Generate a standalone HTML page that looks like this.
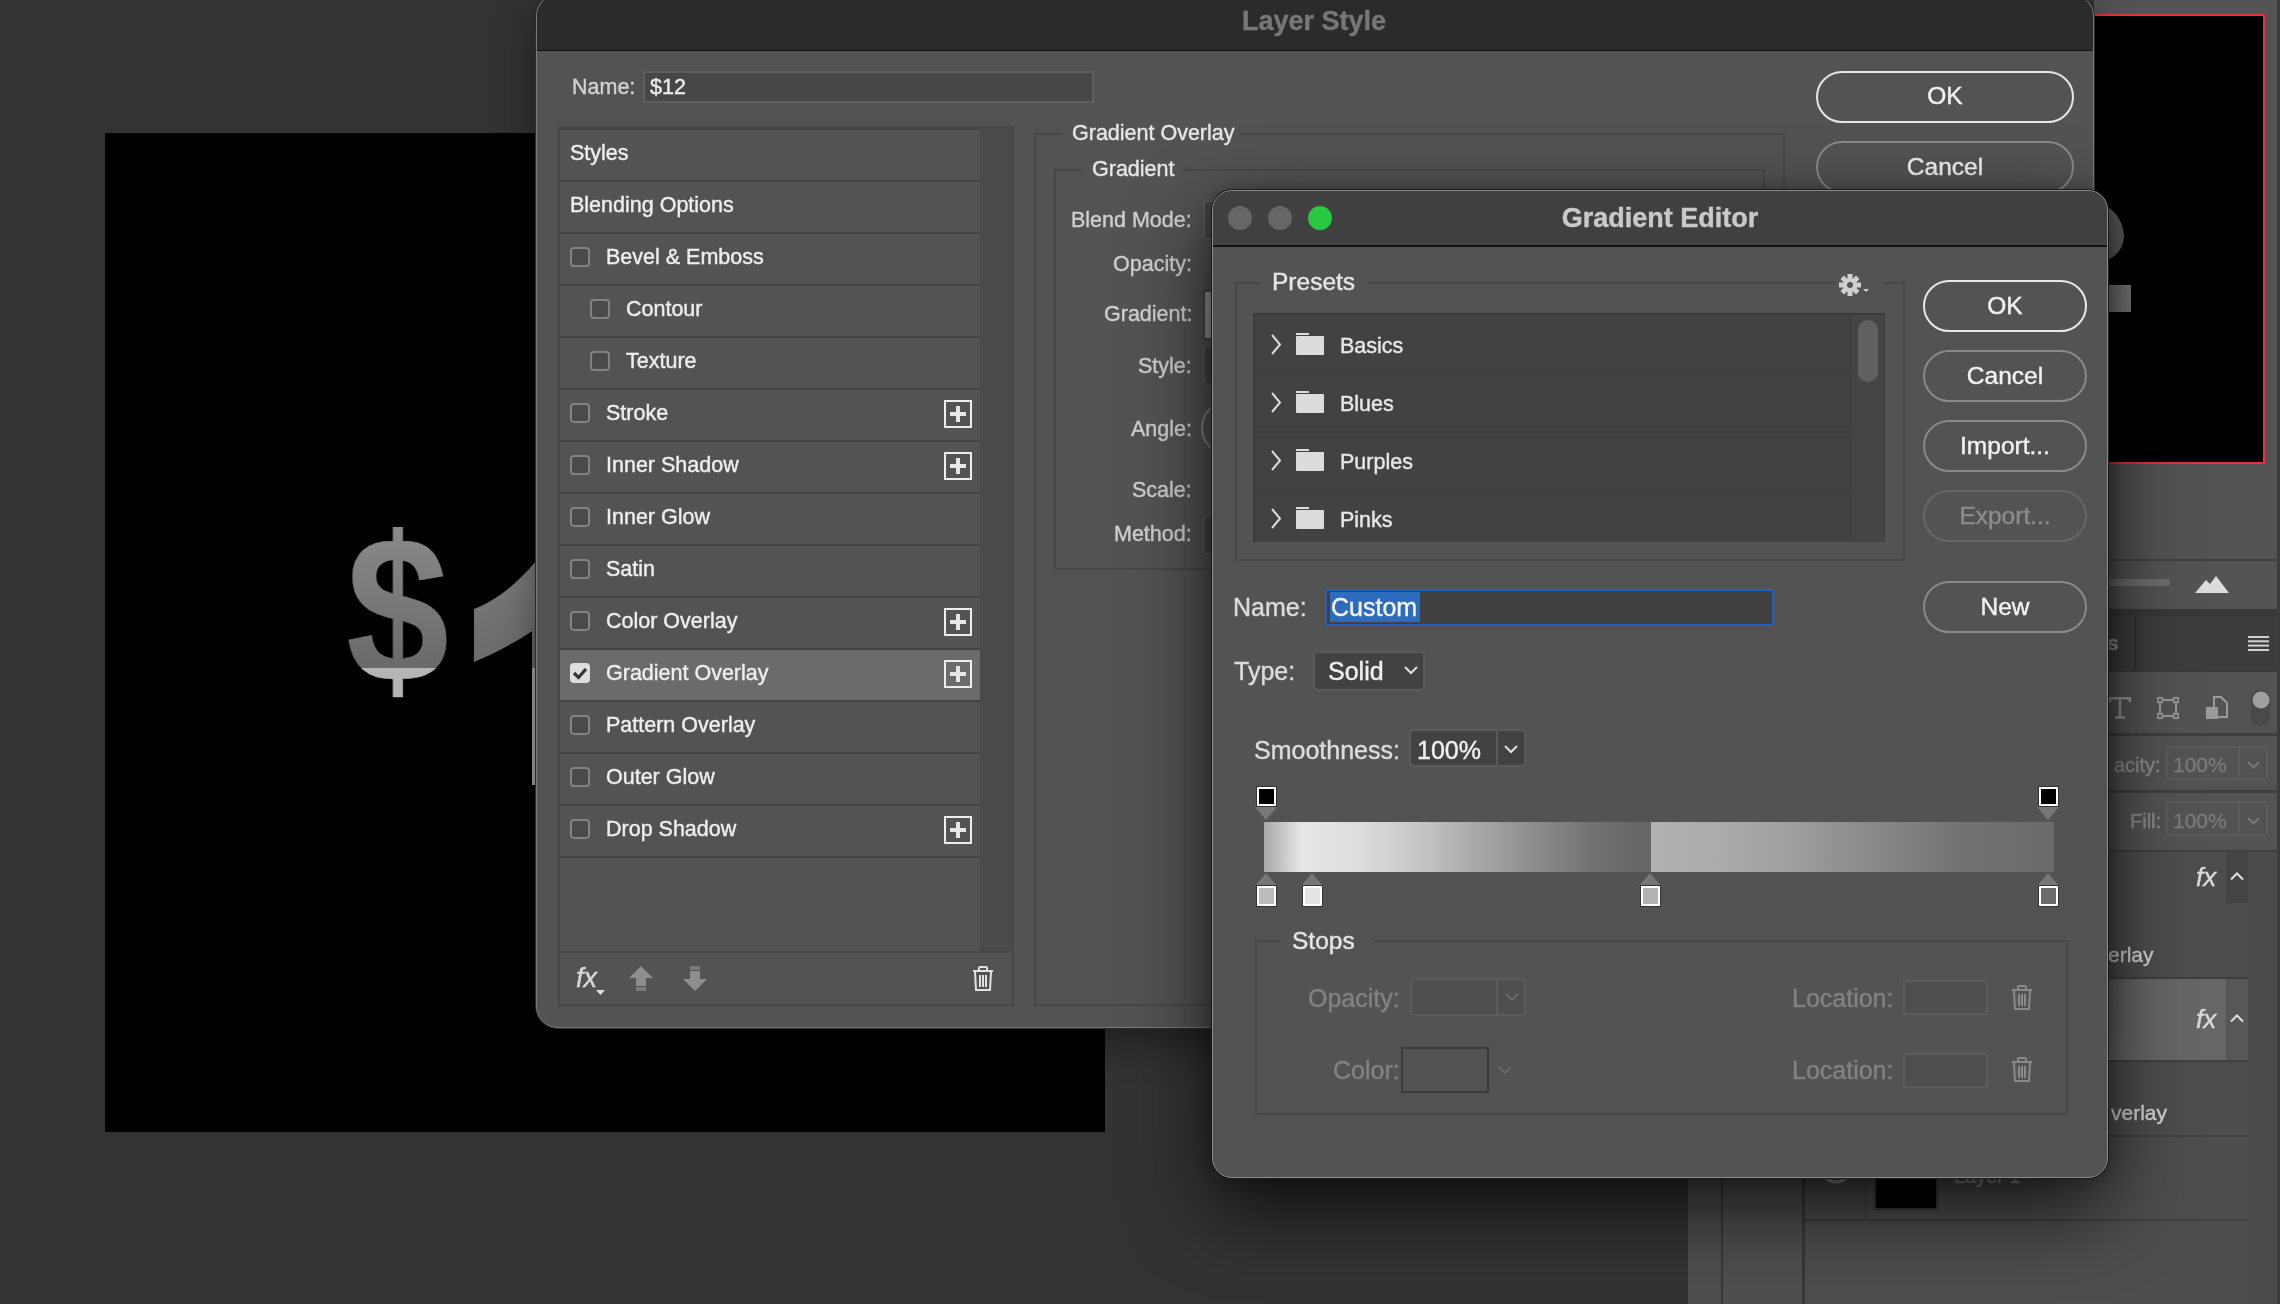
<!DOCTYPE html><html><head><meta charset="utf-8"><style>
html,body{margin:0;padding:0;}
body{width:2280px;height:1304px;overflow:hidden;position:relative;background:#333333;font-family:"Liberation Sans", sans-serif;}
.t{position:absolute;line-height:1;white-space:nowrap;-webkit-font-smoothing:antialiased;will-change:transform;-webkit-text-stroke:0.4px currentColor;}
.b{position:absolute;box-sizing:border-box;}
svg{position:absolute;overflow:visible;}
</style></head><body>
<div class="b" style="left:105px;top:133px;width:1000px;height:999px;background:#000;"></div>
<div class="t" style="left:345.6px;top:507px;font-size:207px;font-weight:bold;transform:scaleX(0.894);transform-origin:0 0;background:linear-gradient(#8a8a8a 10%,#6a6a6a 77.8%,#b5b5b5 77.8%,#b5b5b5 100%);-webkit-background-clip:text;background-clip:text;color:transparent;">$</div>
<svg style="left:0;top:0" width="560" height="800"><defs><linearGradient id="g1" x1="0" y1="0" x2="0" y2="1"><stop offset="0" stop-color="#7c7c7c"/><stop offset="1" stop-color="#6a6a6a"/></linearGradient></defs><path d="M474 609 Q506 597 537 560 L537 628 Q506 649 474 662 Z" fill="url(#g1)"/><rect x="532" y="628" width="5" height="40" fill="#6a6a6a"/><rect x="532" y="668" width="4" height="117" fill="#a4a4a4"/></svg>
<div class="b" style="left:2094px;top:0px;width:186px;height:1304px;background:#535353;"></div>
<div class="b" style="left:2277px;top:0px;width:3px;height:1304px;background:#3b3b3b;"></div>
<div class="b" style="left:2094px;top:14px;width:171px;height:450px;background:#000;border:2px solid #e5323d;border-left:none;"></div>
<svg style="left:2094px;top:190px" width="60" height="130"><path d="M0 10 Q28 20 30 45 Q30 62 14 70 L0 70 Z" fill="#5a5a5a"/><rect x="14" y="95" width="23" height="27" fill="#7a7a7a"/></svg>
<div class="b" style="left:2094px;top:559px;width:183px;height:2px;background:#3f3f3f;"></div>
<div class="b" style="left:2094px;top:579px;width:76px;height:7px;background:#6d6d6d;border-radius:0 3px 3px 0;"></div>
<svg style="left:2195px;top:574px" width="34" height="20"><path d="M0 19 L11 6 L15 10 L21 2 L34 19 Z" fill="#dcdcdc"/></svg>
<div class="b" style="left:2094px;top:609px;width:183px;height:7px;background:#383838;"></div>
<div class="b" style="left:2094px;top:616px;width:183px;height:54px;background:#3d3d3d;"></div>
<div class="b" style="left:2134px;top:616px;width:2px;height:54px;background:#333;"></div>
<div class="t" style="top:632.0px;font-size:21px;color:#8e8e8e;font-weight:bold;left:2107px;">s</div>
<svg style="left:2248px;top:636px" width="21" height="15"><g fill="#d0d0d0"><rect x="0" y="0" width="21" height="2"/><rect x="0" y="4.3" width="21" height="2"/><rect x="0" y="8.6" width="21" height="2"/><rect x="0" y="13" width="21" height="2"/></g></svg>
<div class="b" style="left:2094px;top:670px;width:183px;height:2px;background:#3a3a3a;"></div>
<svg style="left:2109px;top:697px" width="22" height="22"><path d="M1.2 5 V1.2 H20.8 V5 M11 1.2 V20.5 M6 20.5 H16" stroke="#9a9a9a" stroke-width="2.4" fill="none"/></svg>
<svg style="left:2157px;top:697px" width="22" height="22"><rect x="3" y="3" width="16" height="16" stroke="#9a9a9a" stroke-width="2" fill="none"/><g fill="#535353" stroke="#9a9a9a" stroke-width="1.6"><rect x="0.8" y="0.8" width="4.5" height="4.5"/><rect x="16.7" y="0.8" width="4.5" height="4.5"/><rect x="0.8" y="16.7" width="4.5" height="4.5"/><rect x="16.7" y="16.7" width="4.5" height="4.5"/></g></svg>
<svg style="left:2206px;top:696px" width="22" height="24"><path d="M8 1 H15 L21 7 V21 H8 Z" stroke="#9a9a9a" stroke-width="2" fill="none"/><rect x="0" y="11" width="12" height="12" fill="#9a9a9a"/></svg>
<div class="b" style="left:2251px;top:690px;width:19px;height:36px;border-radius:10px;background:#4a4a4a;border:2px solid #474747;"></div>
<svg style="left:2252px;top:691px" width="18" height="18"><circle cx="9" cy="9" r="8.5" fill="#a0a0a0"/></svg>
<div class="b" style="left:2094px;top:733px;width:183px;height:3px;background:#3f3f3f;"></div>
<div class="t" style="top:755.0px;font-size:20px;color:#8c8c8c;font-weight:normal;right:119px;text-align:right;">acity:</div>
<div class="b" style="left:2166px;top:746px;width:102px;height:34px;border:2px solid #5c5c5c;border-radius:4px;"></div>
<div class="b" style="left:2238px;top:746px;width:2px;height:34px;background:#5c5c5c;"></div>
<div class="t" style="top:754.0px;font-size:21px;color:#7a7a7a;font-weight:normal;left:2173px;">100%</div>
<svg style="left:2247px;top:761px" width="13" height="8"><path d="M1 1 L6.5 6.5 L12 1" stroke="#7a7a7a" stroke-width="1.8" fill="none"/></svg>
<div class="b" style="left:2094px;top:790px;width:183px;height:3px;background:#3f3f3f;"></div>
<div class="t" style="top:811.0px;font-size:20px;color:#8c8c8c;font-weight:normal;right:119px;text-align:right;">Fill:</div>
<div class="b" style="left:2166px;top:801px;width:102px;height:35px;border:2px solid #5c5c5c;border-radius:4px;"></div>
<div class="b" style="left:2238px;top:801px;width:2px;height:35px;background:#5c5c5c;"></div>
<div class="t" style="top:810.0px;font-size:21px;color:#7a7a7a;font-weight:normal;left:2173px;">100%</div>
<svg style="left:2247px;top:817px" width="13" height="8"><path d="M1 1 L6.5 6.5 L12 1" stroke="#7a7a7a" stroke-width="1.8" fill="none"/></svg>
<div class="b" style="left:2094px;top:850px;width:183px;height:2px;background:#3f3f3f;"></div>
<div class="b" style="left:1805px;top:852px;width:443px;height:452px;background:#4d4d4d;"></div>
<div class="b" style="left:2248px;top:852px;width:29px;height:452px;background:#4b4b4b;"></div>
<div class="b" style="left:2226px;top:852px;width:22px;height:51px;background:#444;"></div>
<div class="t" style="left:2196px;top:864px;font-size:26px;font-style:italic;color:#dadada;font-family:'Liberation Sans',sans-serif;">fx</div>
<svg style="left:2230px;top:872px" width="14" height="9"><path d="M1 7.5 L7 1.5 L13 7.5" stroke="#e0e0e0" stroke-width="2" fill="none"/></svg>
<div class="t" style="top:943.5px;font-size:21px;color:#d6d6d6;font-weight:normal;left:2108px;">erlay</div>
<div class="b" style="left:1805px;top:977px;width:443px;height:2px;background:#3f3f3f;"></div>
<div class="b" style="left:1805px;top:979px;width:421px;height:81px;background:#666;"></div>
<div class="b" style="left:2226px;top:979px;width:22px;height:81px;background:#575757;"></div>
<div class="t" style="left:2196px;top:1006px;font-size:26px;font-style:italic;color:#dadada;font-family:'Liberation Sans',sans-serif;">fx</div>
<svg style="left:2230px;top:1014px" width="14" height="9"><path d="M1 7.5 L7 1.5 L13 7.5" stroke="#e0e0e0" stroke-width="2" fill="none"/></svg>
<div class="b" style="left:1805px;top:1060px;width:443px;height:2px;background:#3f3f3f;"></div>
<div class="t" style="top:1101.5px;font-size:21px;color:#d6d6d6;font-weight:normal;left:2111px;">verlay</div>
<div class="b" style="left:1805px;top:1135px;width:443px;height:2px;background:#3f3f3f;"></div>
<div class="b" style="left:1805px;top:1219px;width:443px;height:2px;background:#3f3f3f;"></div>
<div class="b" style="left:1874px;top:1146px;width:64px;height:64px;background:#000;border:2px solid #3a3a3a;"></div>
<div class="b" style="left:1865px;top:1137px;width:2px;height:82px;background:#454545;"></div>
<div class="t" style="top:1166.0px;font-size:20px;color:#9a9a9a;font-weight:normal;left:1954px;">Layer 1</div>
<svg style="left:1818px;top:1147px" width="36" height="40"><ellipse cx="18" cy="22" rx="14" ry="13" stroke="#9a9a9a" stroke-width="3" fill="none"/></svg>
<div class="b" style="left:1688px;top:1030px;width:117px;height:274px;background:#4e4e4e;"></div>
<div class="b" style="left:1721px;top:1030px;width:2px;height:274px;background:#383838;"></div>
<div class="b" style="left:1802px;top:1030px;width:3px;height:274px;background:#383838;"></div>
<div class="b" style="left:536px;top:-6px;width:1558px;height:1034px;border-radius:22px;background:#535353;box-shadow:0 0 0 1px #2a2a2a,0 12px 40px rgba(0,0,0,0.45);overflow:hidden;border:1px solid #7a7a7a;">
<div class="b" style="left:0;top:0;width:1558px;height:56px;background:#2b2b2b;border-bottom:1px solid #111;"></div>
</div>
<div class="t" style="top:8.0px;font-size:27px;color:#777777;font-weight:bold;left:1014px;width:600px;text-align:center;">Layer Style</div>
<div class="t" style="top:77.0px;font-size:21.5px;color:#d2d2d2;font-weight:normal;left:572px;">Name:</div>
<div class="b" style="left:643px;top:71px;width:451px;height:32px;background:#474747;border:2px solid #5f5f5f;"></div>
<div class="t" style="top:77.0px;font-size:21.5px;color:#ededed;font-weight:normal;left:650px;">$12</div>
<div class="b" style="left:558px;top:126px;width:456px;height:880px;border:2px solid #474747;background:#535353;"></div>
<div class="b" style="left:980px;top:128px;width:32px;height:824px;background:#4a4a4a;"></div>
<div class="b" style="left:560px;top:128px;width:420px;height:2px;background:#434343;"></div>
<div class="t" style="top:143.0px;font-size:21.5px;color:#eeeeee;font-weight:normal;left:570px;">Styles</div>
<div class="b" style="left:560px;top:180px;width:420px;height:2px;background:#434343;"></div>
<div class="t" style="top:195.0px;font-size:21.5px;color:#eeeeee;font-weight:normal;left:570px;">Blending Options</div>
<div class="b" style="left:560px;top:232px;width:420px;height:2px;background:#434343;"></div>
<div class="b" style="left:570px;top:247px;width:20px;height:20px;border:2px solid #828282;border-radius:4px;background:#4a4a4a;"></div>
<div class="t" style="top:247.0px;font-size:21.5px;color:#eeeeee;font-weight:normal;left:606px;">Bevel &amp; Emboss</div>
<div class="b" style="left:560px;top:284px;width:420px;height:2px;background:#434343;"></div>
<div class="b" style="left:590px;top:299px;width:20px;height:20px;border:2px solid #828282;border-radius:4px;background:#4a4a4a;"></div>
<div class="t" style="top:299.0px;font-size:21.5px;color:#eeeeee;font-weight:normal;left:626px;">Contour</div>
<div class="b" style="left:560px;top:336px;width:420px;height:2px;background:#434343;"></div>
<div class="b" style="left:590px;top:351px;width:20px;height:20px;border:2px solid #828282;border-radius:4px;background:#4a4a4a;"></div>
<div class="t" style="top:351.0px;font-size:21.5px;color:#eeeeee;font-weight:normal;left:626px;">Texture</div>
<div class="b" style="left:560px;top:388px;width:420px;height:2px;background:#434343;"></div>
<div class="b" style="left:570px;top:403px;width:20px;height:20px;border:2px solid #828282;border-radius:4px;background:#4a4a4a;"></div>
<div class="t" style="top:403.0px;font-size:21.5px;color:#eeeeee;font-weight:normal;left:606px;">Stroke</div>
<div class="b" style="left:944px;top:400px;width:28px;height:28px;border:2px solid #eeeeee;"></div>
<div class="b" style="left:950px;top:412px;width:16px;height:4px;background:#e6e6e6;"></div>
<div class="b" style="left:956px;top:406px;width:4px;height:16px;background:#e6e6e6;"></div>
<div class="b" style="left:560px;top:440px;width:420px;height:2px;background:#434343;"></div>
<div class="b" style="left:570px;top:455px;width:20px;height:20px;border:2px solid #828282;border-radius:4px;background:#4a4a4a;"></div>
<div class="t" style="top:455.0px;font-size:21.5px;color:#eeeeee;font-weight:normal;left:606px;">Inner Shadow</div>
<div class="b" style="left:944px;top:452px;width:28px;height:28px;border:2px solid #eeeeee;"></div>
<div class="b" style="left:950px;top:464px;width:16px;height:4px;background:#e6e6e6;"></div>
<div class="b" style="left:956px;top:458px;width:4px;height:16px;background:#e6e6e6;"></div>
<div class="b" style="left:560px;top:492px;width:420px;height:2px;background:#434343;"></div>
<div class="b" style="left:570px;top:507px;width:20px;height:20px;border:2px solid #828282;border-radius:4px;background:#4a4a4a;"></div>
<div class="t" style="top:507.0px;font-size:21.5px;color:#eeeeee;font-weight:normal;left:606px;">Inner Glow</div>
<div class="b" style="left:560px;top:544px;width:420px;height:2px;background:#434343;"></div>
<div class="b" style="left:570px;top:559px;width:20px;height:20px;border:2px solid #828282;border-radius:4px;background:#4a4a4a;"></div>
<div class="t" style="top:559.0px;font-size:21.5px;color:#eeeeee;font-weight:normal;left:606px;">Satin</div>
<div class="b" style="left:560px;top:596px;width:420px;height:2px;background:#434343;"></div>
<div class="b" style="left:570px;top:611px;width:20px;height:20px;border:2px solid #828282;border-radius:4px;background:#4a4a4a;"></div>
<div class="t" style="top:611.0px;font-size:21.5px;color:#eeeeee;font-weight:normal;left:606px;">Color Overlay</div>
<div class="b" style="left:944px;top:608px;width:28px;height:28px;border:2px solid #eeeeee;"></div>
<div class="b" style="left:950px;top:620px;width:16px;height:4px;background:#e6e6e6;"></div>
<div class="b" style="left:956px;top:614px;width:4px;height:16px;background:#e6e6e6;"></div>
<div class="b" style="left:560px;top:650px;width:420px;height:50px;background:#6b6b6b;"></div>
<div class="b" style="left:560px;top:648px;width:420px;height:2px;background:#434343;"></div>
<div class="b" style="left:570px;top:663px;width:20px;height:20px;background:#dedede;border-radius:4px;"></div>
<svg style="left:570px;top:663px" width="20" height="20"><path d="M4 10 L8.5 14.5 L16 6" stroke="#333" stroke-width="3.2" fill="none"/></svg>
<div class="t" style="top:663.0px;font-size:21.5px;color:#eeeeee;font-weight:normal;left:606px;">Gradient Overlay</div>
<div class="b" style="left:944px;top:660px;width:28px;height:28px;border:2px solid #eeeeee;"></div>
<div class="b" style="left:950px;top:672px;width:16px;height:4px;background:#e6e6e6;"></div>
<div class="b" style="left:956px;top:666px;width:4px;height:16px;background:#e6e6e6;"></div>
<div class="b" style="left:560px;top:700px;width:420px;height:2px;background:#434343;"></div>
<div class="b" style="left:570px;top:715px;width:20px;height:20px;border:2px solid #828282;border-radius:4px;background:#4a4a4a;"></div>
<div class="t" style="top:715.0px;font-size:21.5px;color:#eeeeee;font-weight:normal;left:606px;">Pattern Overlay</div>
<div class="b" style="left:560px;top:752px;width:420px;height:2px;background:#434343;"></div>
<div class="b" style="left:570px;top:767px;width:20px;height:20px;border:2px solid #828282;border-radius:4px;background:#4a4a4a;"></div>
<div class="t" style="top:767.0px;font-size:21.5px;color:#eeeeee;font-weight:normal;left:606px;">Outer Glow</div>
<div class="b" style="left:560px;top:804px;width:420px;height:2px;background:#434343;"></div>
<div class="b" style="left:570px;top:819px;width:20px;height:20px;border:2px solid #828282;border-radius:4px;background:#4a4a4a;"></div>
<div class="t" style="top:819.0px;font-size:21.5px;color:#eeeeee;font-weight:normal;left:606px;">Drop Shadow</div>
<div class="b" style="left:944px;top:816px;width:28px;height:28px;border:2px solid #eeeeee;"></div>
<div class="b" style="left:950px;top:828px;width:16px;height:4px;background:#e6e6e6;"></div>
<div class="b" style="left:956px;top:822px;width:4px;height:16px;background:#e6e6e6;"></div>
<div class="b" style="left:560px;top:856px;width:420px;height:2px;background:#434343;"></div>
<div class="b" style="left:560px;top:951px;width:452px;height:2px;background:#474747;"></div>
<div class="t" style="left:576px;top:965px;font-size:27px;font-style:italic;color:#d8d8d8;">fx</div>
<svg style="left:596px;top:990px" width="10" height="6"><path d="M0 0 H9 L4.5 5 Z" fill="#e0e0e0"/></svg>
<svg style="left:629px;top:966px" width="24" height="26"><path d="M12 0 L24 12 H17 V20 H7 V12 H0 Z" fill="#8e8e8e"/><rect x="7" y="21" width="10" height="4" fill="#7a7a7a"/></svg>
<svg style="left:683px;top:966px" width="24" height="26"><rect x="7" y="0" width="10" height="4" fill="#7a7a7a"/><path d="M7 5 H17 V13 H24 L12 25 L0 13 H7 Z" fill="#8e8e8e"/></svg>
<svg style="left:972px;top:966px" width="22" height="26"><g stroke="#e2e2e2" stroke-width="2" fill="none"><path d="M1 5 H21"/><path d="M7 5 V2 Q7 1 8 1 H14 Q15 1 15 2 V5"/><path d="M3 6 L4 24 H18 L19 6"/><path d="M8 9 V21 M11 9 V21 M14 9 V21"/></g></svg>
<div class="b" style="left:1034px;top:133px;width:751px;height:873px;border:2px solid #474747;"></div>
<div class="b" style="left:1062px;top:131px;width:178px;height:6px;background:#535353;"></div>
<div class="t" style="top:123.0px;font-size:21.5px;color:#e6e6e6;font-weight:normal;left:1072px;">Gradient Overlay</div>
<div class="b" style="left:1054px;top:169px;width:711px;height:401px;border:2px solid #474747;"></div>
<div class="b" style="left:1082px;top:167px;width:100px;height:6px;background:#535353;"></div>
<div class="t" style="top:159.0px;font-size:21.5px;color:#e6e6e6;font-weight:normal;left:1092px;">Gradient</div>
<div class="t" style="top:209.5px;font-size:21.5px;color:#cfcfcf;font-weight:normal;right:1088px;text-align:right;">Blend Mode:</div>
<div class="t" style="top:253.5px;font-size:21.5px;color:#cfcfcf;font-weight:normal;right:1088px;text-align:right;">Opacity:</div>
<div class="t" style="top:303.5px;font-size:21.5px;color:#cfcfcf;font-weight:normal;right:1088px;text-align:right;">Gradient:</div>
<div class="t" style="top:356.0px;font-size:21.5px;color:#cfcfcf;font-weight:normal;right:1088px;text-align:right;">Style:</div>
<div class="t" style="top:419.0px;font-size:21.5px;color:#cfcfcf;font-weight:normal;right:1088px;text-align:right;">Angle:</div>
<div class="t" style="top:480.0px;font-size:21.5px;color:#cfcfcf;font-weight:normal;right:1088px;text-align:right;">Scale:</div>
<div class="t" style="top:524.0px;font-size:21.5px;color:#cfcfcf;font-weight:normal;right:1088px;text-align:right;">Method:</div>
<div class="b" style="left:1203px;top:200px;width:30px;height:40px;border:2px solid #5c5c5c;border-radius:4px;background:#464646;"></div>
<div class="b" style="left:1203px;top:290px;width:30px;height:50px;border:2px solid #474747;border-radius:3px;background:#9a9a9a;"></div>
<div class="b" style="left:1203px;top:345px;width:30px;height:40px;border:2px solid #5c5c5c;border-radius:4px;background:#464646;"></div>
<div class="b" style="left:1201px;top:400px;width:56px;height:56px;border:2px solid #8a8a8a;border-radius:50%;"></div>
<div class="b" style="left:1203px;top:515px;width:30px;height:40px;border:2px solid #5c5c5c;border-radius:4px;background:#464646;"></div>
<div class="b" style="left:1816px;top:71px;width:258px;height:52px;border:2px solid #e6e6e6;border-radius:26px;background:#535353;"></div>
<div class="t" style="top:84.0px;font-size:24.5px;color:#f0f0f0;font-weight:normal;left:1645px;width:600px;text-align:center;">OK</div>
<div class="b" style="left:1816px;top:141px;width:258px;height:52px;border:2px solid #8a8a8a;border-radius:26px;background:#535353;"></div>
<div class="t" style="top:155.0px;font-size:24.5px;color:#f0f0f0;font-weight:normal;left:1645px;width:600px;text-align:center;">Cancel</div>
<div class="b" style="left:1212px;top:190px;width:896px;height:988px;border-radius:20px;background:#535353;box-shadow:0 0 0 1px #1a1a1a,0 30px 80px rgba(0,0,0,0.75),0 0 20px rgba(0,0,0,0.25);overflow:hidden;border:1px solid #8a8a8a;">
<div class="b" style="left:0;top:0;width:896px;height:56px;background:#404040;border-bottom:2px solid #111;"></div>
</div>
<div class="b" style="left:1228px;top:206px;width:24px;height:24px;border-radius:50%;background:#666666;"></div>
<div class="b" style="left:1268px;top:206px;width:24px;height:24px;border-radius:50%;background:#666666;"></div>
<div class="b" style="left:1308px;top:206px;width:24px;height:24px;border-radius:50%;background:#28c840;"></div>
<div class="t" style="top:204.5px;font-size:27px;color:#c9c9c9;font-weight:bold;left:1360px;width:600px;text-align:center;">Gradient Editor</div>
<div class="b" style="left:1235px;top:282px;width:670px;height:279px;border:2px solid #474747;"></div>
<div class="b" style="left:1260px;top:280px;width:108px;height:6px;background:#535353;"></div>
<div class="t" style="top:270.0px;font-size:24.5px;color:#e6e6e6;font-weight:normal;left:1272px;">Presets</div>
<div class="b" style="left:1836px;top:276px;width:48px;height:20px;background:#535353;"></div>
<svg style="left:1838px;top:273px" width="34" height="24"><g transform="translate(12,12)"><circle r="7" fill="#d0d0d0"/><g fill="#d0d0d0"><rect x="-2.5" y="-11" width="5" height="22"/><rect x="-2.5" y="-11" width="5" height="22" transform="rotate(45)"/><rect x="-2.5" y="-11" width="5" height="22" transform="rotate(90)"/><rect x="-2.5" y="-11" width="5" height="22" transform="rotate(135)"/></g><circle r="3" fill="#535353"/></g><path d="M25 16 H31 L28 19 Z" fill="#d0d0d0"/></svg>
<div class="b" style="left:1253px;top:313px;width:632px;height:229px;background:#424242;border:2px solid #3b3b3b;border-bottom:none;"></div>
<div class="b" style="left:1852px;top:315px;width:32px;height:226px;background:#454545;"></div>
<div class="b" style="left:1858px;top:320px;width:20px;height:62px;background:#606060;border-radius:10px;"></div>
<svg style="left:1270px;top:334px" width="12" height="22"><path d="M2 1 L10 10.5 L2 20" stroke="#dcdcdc" stroke-width="2" fill="none"/></svg>
<svg style="left:1296px;top:332px" width="30" height="24"><path d="M0 3 H13 V1 H0 Z" fill="#dcdcdc"/><rect x="0" y="4" width="28" height="19" rx="1" fill="#dcdcdc"/></svg>
<div class="t" style="top:335.5px;font-size:21.5px;color:#e8e8e8;font-weight:normal;left:1340px;">Basics</div>
<div class="b" style="left:1255px;top:373px;width:597px;height:2px;background:#3e3e3e;"></div>
<svg style="left:1270px;top:392px" width="12" height="22"><path d="M2 1 L10 10.5 L2 20" stroke="#dcdcdc" stroke-width="2" fill="none"/></svg>
<svg style="left:1296px;top:390px" width="30" height="24"><path d="M0 3 H13 V1 H0 Z" fill="#dcdcdc"/><rect x="0" y="4" width="28" height="19" rx="1" fill="#dcdcdc"/></svg>
<div class="t" style="top:393.5px;font-size:21.5px;color:#e8e8e8;font-weight:normal;left:1340px;">Blues</div>
<div class="b" style="left:1255px;top:431px;width:597px;height:2px;background:#3e3e3e;"></div>
<svg style="left:1270px;top:450px" width="12" height="22"><path d="M2 1 L10 10.5 L2 20" stroke="#dcdcdc" stroke-width="2" fill="none"/></svg>
<svg style="left:1296px;top:448px" width="30" height="24"><path d="M0 3 H13 V1 H0 Z" fill="#dcdcdc"/><rect x="0" y="4" width="28" height="19" rx="1" fill="#dcdcdc"/></svg>
<div class="t" style="top:451.5px;font-size:21.5px;color:#e8e8e8;font-weight:normal;left:1340px;">Purples</div>
<div class="b" style="left:1255px;top:489px;width:597px;height:2px;background:#3e3e3e;"></div>
<svg style="left:1270px;top:508px" width="12" height="22"><path d="M2 1 L10 10.5 L2 20" stroke="#dcdcdc" stroke-width="2" fill="none"/></svg>
<svg style="left:1296px;top:506px" width="30" height="24"><path d="M0 3 H13 V1 H0 Z" fill="#dcdcdc"/><rect x="0" y="4" width="28" height="19" rx="1" fill="#dcdcdc"/></svg>
<div class="t" style="top:509.5px;font-size:21.5px;color:#e8e8e8;font-weight:normal;left:1340px;">Pinks</div>
<div class="b" style="left:1923px;top:280px;width:164px;height:52px;border:2px solid #e8e8e8;border-radius:26px;"></div>
<div class="t" style="top:294.0px;font-size:24.5px;color:#f2f2f2;font-weight:normal;left:1705px;width:600px;text-align:center;">OK</div>
<div class="b" style="left:1923px;top:350px;width:164px;height:52px;border:2px solid #8a8a8a;border-radius:26px;"></div>
<div class="t" style="top:364.0px;font-size:24.5px;color:#f2f2f2;font-weight:normal;left:1705px;width:600px;text-align:center;">Cancel</div>
<div class="b" style="left:1923px;top:420px;width:164px;height:52px;border:2px solid #8a8a8a;border-radius:26px;"></div>
<div class="t" style="top:434.0px;font-size:24.5px;color:#f2f2f2;font-weight:normal;left:1705px;width:600px;text-align:center;">Import...</div>
<div class="b" style="left:1923px;top:490px;width:164px;height:52px;border:2px solid #676767;border-radius:26px;"></div>
<div class="t" style="top:504.0px;font-size:24.5px;color:#8c8c8c;font-weight:normal;left:1705px;width:600px;text-align:center;">Export...</div>
<div class="b" style="left:1923px;top:581px;width:164px;height:52px;border:2px solid #8a8a8a;border-radius:26px;"></div>
<div class="t" style="top:595.0px;font-size:24.5px;color:#f2f2f2;font-weight:normal;left:1705px;width:600px;text-align:center;">New</div>
<div class="t" style="top:594.5px;font-size:25px;color:#dcdcdc;font-weight:normal;left:1233px;">Name:</div>
<div class="b" style="left:1325px;top:589px;width:449px;height:37px;background:#404040;border:2px solid #2160c4;"></div>
<div class="b" style="left:1330px;top:592px;width:90px;height:30px;background:#2d6cbd;"></div>
<div class="t" style="top:594.5px;font-size:25px;color:#f4f4f4;font-weight:normal;left:1331px;">Custom</div>
<div class="t" style="top:659.0px;font-size:25px;color:#dcdcdc;font-weight:normal;left:1234px;">Type:</div>
<div class="b" style="left:1313px;top:651px;width:112px;height:40px;background:#424242;border:2px solid #5a5a5a;border-radius:5px;"></div>
<div class="t" style="top:659.0px;font-size:25px;color:#f0f0f0;font-weight:normal;left:1328px;">Solid</div>
<svg style="left:1404px;top:666px" width="14" height="9"><path d="M1 1 L7 7 L13 1" stroke="#e0e0e0" stroke-width="2" fill="none"/></svg>
<div class="t" style="top:737.5px;font-size:25px;color:#dcdcdc;font-weight:normal;left:1254px;">Smoothness:</div>
<div class="b" style="left:1409px;top:729px;width:117px;height:38px;background:#424242;border:2px solid #5a5a5a;border-radius:5px;"></div>
<div class="b" style="left:1496px;top:730px;width:2px;height:36px;background:#5a5a5a;"></div>
<div class="t" style="top:737.5px;font-size:25px;color:#f0f0f0;font-weight:normal;left:1417px;">100%</div>
<svg style="left:1504px;top:745px" width="14" height="9"><path d="M1 1 L7 7 L13 1" stroke="#e0e0e0" stroke-width="2" fill="none"/></svg>
<div class="b" style="left:1264px;top:822px;width:790px;height:50px;background:linear-gradient(90deg,#a8a8a8 0%,#e6e6e6 4.7%,#dcdcdc 12.4%,#c8c8c8 19%,#acacac 25.8%,#8a8a8a 34.8%,#727272 41.5%,#686868 46%,#656565 49%,#b0b0b0 49%,#ababab 58%,#a0a0a0 66%,#8c8c8c 75.3%,#727272 88.8%,#6a6a6a 100%);"></div>
<div class="b" style="left:1256.5px;top:787px;width:19px;height:19px;background:#000;border:2px solid #fff;box-shadow:0 0 0 1px #333;"></div>
<svg style="left:1255px;top:807px" width="22" height="14"><path d="M0 0 H22 L11 13 Z" fill="#777"/></svg>
<div class="b" style="left:2038.5px;top:787px;width:19px;height:19px;background:#000;border:2px solid #fff;box-shadow:0 0 0 1px #333;"></div>
<svg style="left:2037px;top:807px" width="22" height="14"><path d="M0 0 H22 L11 13 Z" fill="#777"/></svg>
<svg style="left:1255px;top:873px" width="22" height="14"><path d="M0 13 H22 L11 0 Z" fill="#777"/></svg>
<div class="b" style="left:1256.5px;top:886px;width:19px;height:20px;background:#bcbcbc;border:2px solid #fff;box-shadow:0 0 0 1px #333;"></div>
<svg style="left:1301px;top:873px" width="22" height="14"><path d="M0 13 H22 L11 0 Z" fill="#777"/></svg>
<div class="b" style="left:1302.5px;top:886px;width:19px;height:20px;background:#e4e4e4;border:2px solid #fff;box-shadow:0 0 0 1px #333;"></div>
<svg style="left:1639px;top:873px" width="22" height="14"><path d="M0 13 H22 L11 0 Z" fill="#777"/></svg>
<div class="b" style="left:1640.5px;top:886px;width:19px;height:20px;background:#b4b4b4;border:2px solid #fff;box-shadow:0 0 0 1px #333;"></div>
<svg style="left:2037px;top:873px" width="22" height="14"><path d="M0 13 H22 L11 0 Z" fill="#777"/></svg>
<div class="b" style="left:2038.5px;top:886px;width:19px;height:20px;background:#6a6a6a;border:2px solid #fff;box-shadow:0 0 0 1px #333;"></div>
<div class="b" style="left:1255px;top:940px;width:813px;height:175px;border:2px solid #474747;"></div>
<div class="b" style="left:1280px;top:938px;width:94px;height:6px;background:#535353;"></div>
<div class="t" style="top:928.5px;font-size:24.5px;color:#e6e6e6;font-weight:normal;left:1292px;">Stops</div>
<div class="t" style="top:985.5px;font-size:25px;color:#828282;font-weight:normal;right:880px;text-align:right;">Opacity:</div>
<div class="b" style="left:1410px;top:978px;width:116px;height:38px;border:2px solid #5c5c5c;border-radius:5px;background:#4f4f4f;"></div>
<div class="b" style="left:1496px;top:979px;width:2px;height:36px;background:#5c5c5c;"></div>
<svg style="left:1505px;top:993px" width="14" height="9"><path d="M1 1 L7 7 L13 1" stroke="#707070" stroke-width="1.6" fill="none"/></svg>
<div class="t" style="top:985.5px;font-size:25px;color:#828282;font-weight:normal;right:387px;text-align:right;">Location:</div>
<div class="b" style="left:1903px;top:980px;width:85px;height:35px;border:2px solid #5c5c5c;background:#4f4f4f;"></div>
<div class="t" style="top:1058.0px;font-size:25px;color:#828282;font-weight:normal;right:880px;text-align:right;">Color:</div>
<div class="b" style="left:1401px;top:1047px;width:88px;height:46px;border:2px solid #3a3a3a;background:#535353;"></div>
<svg style="left:1498px;top:1066px" width="14" height="9"><path d="M1 1 L7 7 L13 1" stroke="#6e6e6e" stroke-width="1.6" fill="none"/></svg>
<div class="t" style="top:1058.0px;font-size:25px;color:#828282;font-weight:normal;right:387px;text-align:right;">Location:</div>
<div class="b" style="left:1903px;top:1053px;width:85px;height:35px;border:2px solid #5c5c5c;background:#4f4f4f;"></div>
<svg style="left:2011px;top:985px" width="22" height="26"><g stroke="#8a8a8a" stroke-width="2" fill="none"><path d="M1 5 H21"/><path d="M7 5 V2 Q7 1 8 1 H14 Q15 1 15 2 V5"/><path d="M3 6 L4 24 H18 L19 6"/><path d="M8 9 V21 M11 9 V21 M14 9 V21"/></g></svg>
<svg style="left:2011px;top:1057px" width="22" height="26"><g stroke="#8a8a8a" stroke-width="2" fill="none"><path d="M1 5 H21"/><path d="M7 5 V2 Q7 1 8 1 H14 Q15 1 15 2 V5"/><path d="M3 6 L4 24 H18 L19 6"/><path d="M8 9 V21 M11 9 V21 M14 9 V21"/></g></svg>
</body></html>
